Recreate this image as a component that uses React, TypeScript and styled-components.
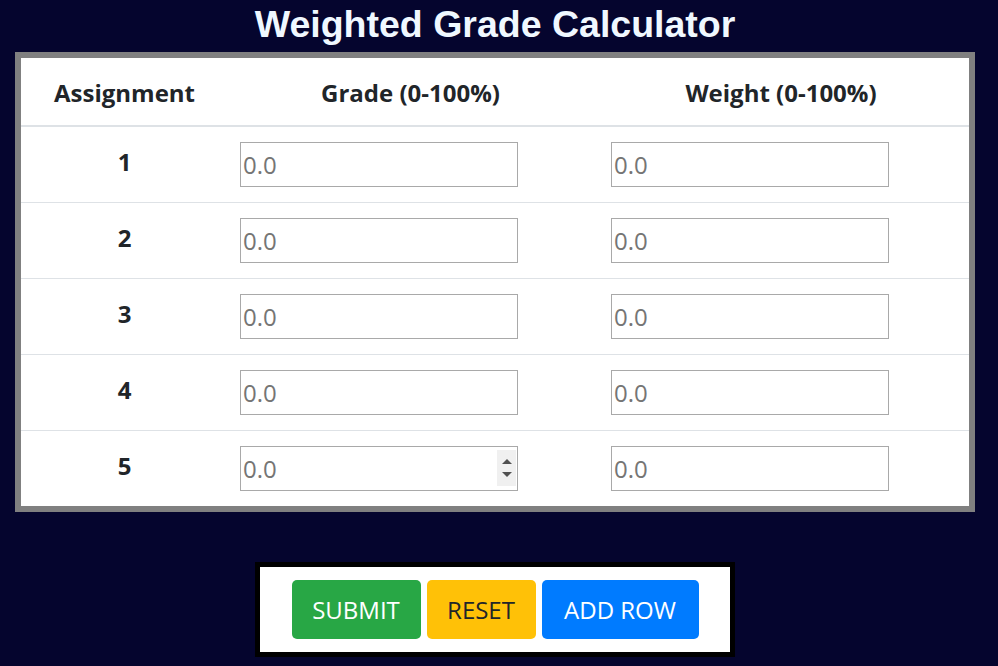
import React from "react";
import styled, { createGlobalStyle } from "styled-components";

const Global = createGlobalStyle`
  html, body {
    margin: 0;
    padding: 0;
    background: #05052e;
  }
  body {
    font-family: "Open Sans", "Noto Sans", sans-serif;
  }
  * { box-sizing: border-box; }
`;

const Page = styled.div`
  width: 990px;
  padding-top: 3px;
`;

const Title = styled.h1`
  margin: 0 0 8px;
  height: 41px;
  text-align: center;
  font-family: "Liberation Sans", Arial, sans-serif;
  font-weight: 700;
  font-size: 37.5px;
  line-height: 43px;
  color: #f0f8ff;
`;

const TableBox = styled.div`
  margin: 0 15px;
  width: 960px;
  border: 6px solid #808080;
  background: #ffffff;
`;

const Row = styled.div<{ $head?: boolean; $first?: boolean }>`
  display: grid;
  grid-template-columns: 207px 371px 1fr;
  align-items: center;
  height: ${(p) => (p.$head ? "69px" : p.$first ? "75px" : "76px")};
  border-bottom: ${(p) => (p.$head ? "2px solid #dee2e6" : "none")};
  border-top: ${(p) => (p.$head || p.$first ? "none" : "1px solid #dee2e6")};
`;

const HeadCell = styled.div<{ $shift?: boolean }>`
  text-align: center;
  font-weight: 700;
  font-size: 24px;
  color: #212529;
  padding-top: 2px;
  padding-right: ${(p) => (p.$shift ? "6px" : "0")};
`;

const NumCell = styled.div`
  text-align: center;
  font-weight: 700;
  font-size: 24px;
  color: #212529;
  padding-bottom: 7px;
`;

const InputCell = styled.div`
  padding-left: 12px;
`;

const InputWrap = styled.div`
  position: relative;
  width: 278px;
  height: 45px;
`;

const NumInput = styled.input`
  width: 278px;
  height: 45px;
  border: 1px solid #a9a9a9;
  border-radius: 0;
  padding: 0 0 0 2px;
  margin: 0;
  font-family: "Open Sans", "Noto Sans", sans-serif;
  font-size: 24px;
  color: #212529;
  background: #fff;
  outline: none;
  &::placeholder {
    color: #757575;
  }
`;

const Spinner = styled.div`
  position: absolute;
  right: 2px;
  top: 4px;
  bottom: 5px;
  width: 19px;
  background: #f0f0f0;
  display: flex;
  flex-direction: column;
  align-items: center;
  justify-content: center;
  gap: 8px;
`;

const Arrow = styled.div<{ $down?: boolean }>`
  width: 0;
  height: 0;
  border-left: 5px solid transparent;
  border-right: 5px solid transparent;
  ${(p) =>
    p.$down
      ? "border-top: 5px solid #505050;"
      : "border-bottom: 5px solid #505050;"}
`;

const PanelWrap = styled.div`
  display: flex;
  justify-content: center;
  padding-top: 50px;
`;

const Panel = styled.div`
  width: 480px;
  border: 5px solid #000;
  background: #fff;
  padding: 13px 0;
  display: flex;
  justify-content: center;
  gap: 6px;
`;

const Btn = styled.button<{ $bg: string; $fg: string; $w: number }>`
  width: ${(p) => p.$w}px;
  height: 59px;
  border: none;
  border-radius: 5px;
  background: ${(p) => p.$bg};
  color: ${(p) => p.$fg};
  font-family: "Open Sans", "Noto Sans", sans-serif;
  font-size: 24px;
  font-weight: 400;
  padding: 0;
  cursor: pointer;
`;

const rows = [1, 2, 3, 4, 5];

export default function App() {
  return (
    <>
      <Global />
      <Page>
        <Title>Weighted Grade Calculator</Title>
        <TableBox>
          <Row $head>
            <HeadCell>Assignment</HeadCell>
            <HeadCell $shift>Grade (0-100%)</HeadCell>
            <HeadCell $shift>Weight (0-100%)</HeadCell>
          </Row>
          {rows.map((n, i) => (
            <Row key={n} $first={i === 0}>
              <NumCell>{n}</NumCell>
              <InputCell>
                <InputWrap>
                  <NumInput type="text" placeholder="0.0" />
                  {n === 5 && (
                    <Spinner>
                      <Arrow />
                      <Arrow $down />
                    </Spinner>
                  )}
                </InputWrap>
              </InputCell>
              <InputCell>
                <InputWrap>
                  <NumInput type="text" placeholder="0.0" />
                </InputWrap>
              </InputCell>
            </Row>
          ))}
        </TableBox>
        <PanelWrap>
          <Panel>
            <Btn $bg="#28a745" $fg="#ffffff" $w={129}>SUBMIT</Btn>
            <Btn $bg="#ffc107" $fg="#212529" $w={109}>RESET</Btn>
            <Btn $bg="#007bff" $fg="#ffffff" $w={157}>ADD ROW</Btn>
          </Panel>
        </PanelWrap>
      </Page>
    </>
  );
}
